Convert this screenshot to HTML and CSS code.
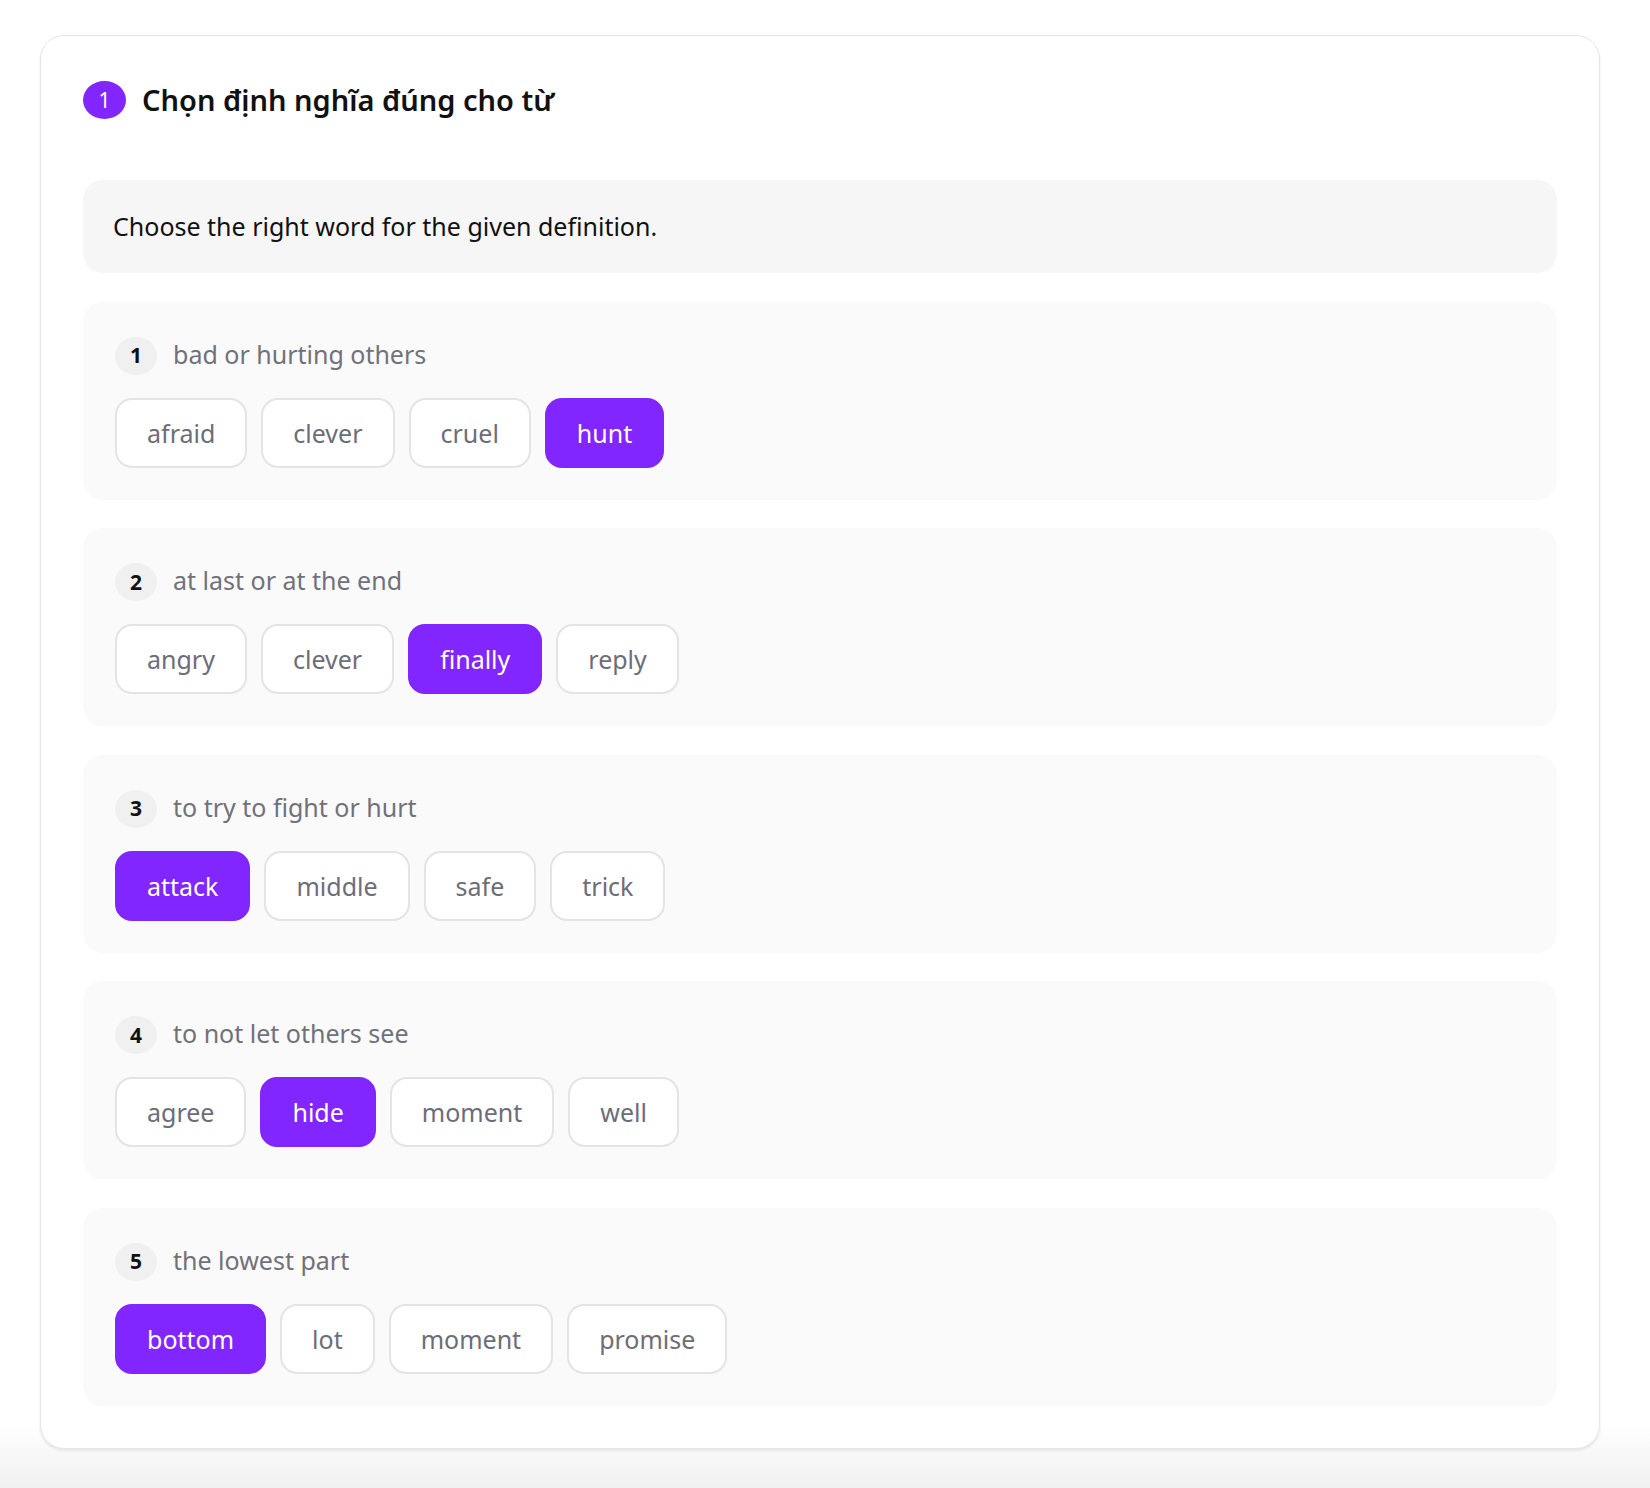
FILE: index.html
```html
<!DOCTYPE html>
<html lang="vi">
<head>
<meta charset="utf-8">
<title>Chọn định nghĩa đúng cho từ</title>
<link rel="stylesheet" href="styles.css">
</head>
<body>
<div class="page">
  <section class="card">
    <header class="card-header">
      <span class="step-badge">1</span>
      <h1 class="card-title">Chọn định nghĩa đúng cho từ</h1>
    </header>
    <div class="content">
      <div class="instruction">Choose the right word for the given definition.</div>

      <div class="question">
        <div class="question-row">
          <span class="q-num">1</span>
          <span class="q-text">bad or hurting others</span>
        </div>
        <div class="options">
          <button class="option">afraid</button>
          <button class="option">clever</button>
          <button class="option">cruel</button>
          <button class="option selected">hunt</button>
        </div>
      </div>

      <div class="question">
        <div class="question-row">
          <span class="q-num">2</span>
          <span class="q-text">at last or at the end</span>
        </div>
        <div class="options">
          <button class="option">angry</button>
          <button class="option">clever</button>
          <button class="option selected">finally</button>
          <button class="option">reply</button>
        </div>
      </div>

      <div class="question">
        <div class="question-row">
          <span class="q-num">3</span>
          <span class="q-text">to try to fight or hurt</span>
        </div>
        <div class="options">
          <button class="option selected">attack</button>
          <button class="option">middle</button>
          <button class="option">safe</button>
          <button class="option">trick</button>
        </div>
      </div>

      <div class="question">
        <div class="question-row">
          <span class="q-num">4</span>
          <span class="q-text">to not let others see</span>
        </div>
        <div class="options">
          <button class="option">agree</button>
          <button class="option selected">hide</button>
          <button class="option">moment</button>
          <button class="option">well</button>
        </div>
      </div>

      <div class="question">
        <div class="question-row">
          <span class="q-num">5</span>
          <span class="q-text">the lowest part</span>
        </div>
        <div class="options">
          <button class="option selected">bottom</button>
          <button class="option">lot</button>
          <button class="option">moment</button>
          <button class="option">promise</button>
        </div>
      </div>
    </div>
  </section>
</div>
</body>
</html>
```

FILE: styles.css
```css
html {
  min-height: 1488px;
}

body {
  margin: 0;
  min-height: 1488px;
  font-family: "Noto Sans", "Open Sans", sans-serif;
  color: #111111;
  background: linear-gradient(to bottom, #ffffff 0, #ffffff 1425px, #f0f0f0 1488px);
}

.page {
  padding: 35px 0 0 40px;
}

.card {
  width: 1560px;
  box-sizing: border-box;
  background: #ffffff;
  border: 1px solid #e6e6e6;
  border-radius: 24px;
  box-shadow: 0 2px 3px rgba(0, 0, 0, 0.08);
  padding: 44px 42px 42px;
}

.card-header {
  display: flex;
  align-items: center;
  gap: 16px;
  height: 40px;
  margin-bottom: 60px;
}

.step-badge {
  display: inline-flex;
  align-items: center;
  justify-content: center;
  width: 43px;
  height: 38px;
  border-radius: 50%;
  background: #8126ff;
  color: #ffffff;
  font-size: 21px;
  line-height: 1;
}

.card-title {
  margin: 0;
  font-size: 29px;
  font-weight: 600;
  line-height: 40px;
  color: #111111;
}

.content {
  display: flex;
  flex-direction: column;
  gap: 28.5px;
}

.instruction {
  background: #f6f6f6;
  border-radius: 20px;
  padding: 28px 30px;
  font-size: 25px;
  line-height: 37px;
  color: #111111;
}

.question {
  background: #fafafa;
  border-radius: 20px;
  padding: 32px 32px;
  display: flex;
  flex-direction: column;
  gap: 20px;
}

.question-row {
  display: flex;
  align-items: center;
  gap: 16px;
  height: 44px;
}

.q-num {
  display: inline-flex;
  align-items: center;
  justify-content: center;
  width: 42px;
  height: 38px;
  border-radius: 50%;
  background: #f0f0f0;
  color: #111111;
  font-size: 21px;
  font-weight: 700;
  line-height: 1;
}

.q-text {
  font-size: 25px;
  line-height: 38px;
  padding-bottom: 4px;
  color: #71717a;
}

.options {
  display: flex;
  gap: 14px;
}

.option {
  display: inline-flex;
  align-items: center;
  justify-content: center;
  box-sizing: border-box;
  height: 70px;
  padding: 0 30px;
  border: 2px solid #e4e4e7;
  border-radius: 17px;
  background: #ffffff;
  font-family: "Noto Sans", "Open Sans", sans-serif;
  font-size: 25px;
  color: #6d6d78;
  cursor: pointer;
}

.option.selected {
  background: #8126ff;
  border-color: #8126ff;
  color: #ffffff;
}
```
